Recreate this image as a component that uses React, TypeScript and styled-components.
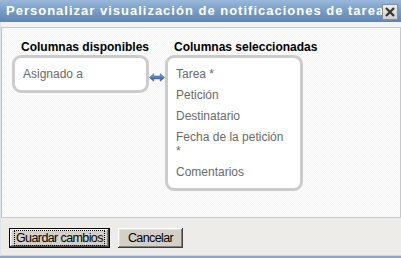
import React from "react";
import styled, { createGlobalStyle } from "styled-components";

const Global = createGlobalStyle`
  html, body { margin: 0; padding: 0; background: #ffffff; }
  body { width: 401px; height: 258px; overflow: hidden; font-family: "Liberation Sans", Arial, sans-serif; }
`;

const Dialog = styled.div`
  width: 401px;
  height: 258px;
  box-sizing: border-box;
  display: flex;
  flex-direction: column;
  background: #f3f3f3;
  border-bottom: 2px solid #8aa8c8;
`;

const TitleBar = styled.div`
  height: 22px;
  flex: none;
  display: flex;
  align-items: center;
  position: relative;
  background: linear-gradient(#9ab8da 0%, #7a9fc8 45%, #5f86b2 100%);
  overflow: hidden;
`;

const Title = styled.div`
  padding-left: 6px;
  color: #ffffff;
  font-family: "Liberation Sans", Arial, sans-serif;
  font-weight: bold;
  font-size: 13px;
  letter-spacing: 1px;
  white-space: nowrap;
  line-height: 22px;
`;

const CloseButton = styled.button`
  position: absolute;
  top: 4px;
  right: 3px;
  width: 16px;
  height: 16px;
  padding: 0;
  box-sizing: border-box;
  border: 1px solid #8d8d8d;
  background: linear-gradient(#ececec, #cfcfcf);
  display: flex;
  align-items: center;
  justify-content: center;
`;

const Body = styled.div`
  flex: 1;
  display: flex;
  flex-direction: column;
  padding-top: 5px;
  border-left: 1px solid #dde3ea;
`;

const Panel = styled.div`
  height: 191px;
  box-sizing: border-box;
  border: 1px solid #c3cad2;
  border-left-color: #b9c2cc;
  background-color: #fafafa;
  background-image: repeating-conic-gradient(#f6f6f6 0% 25%, #fcfcfc 0% 50%);
  background-size: 2px 2px;
  padding: 12px 0 0 10px;
  display: flex;
  align-items: flex-start;
`;

const Column = styled.div`
  display: flex;
  flex-direction: column;
`;

const Label = styled.div`
  font-family: "Liberation Sans", Arial, sans-serif;
  font-weight: bold;
  font-size: 12px;
  line-height: 14px;
  color: #000000;
  padding-left: 9px;
  margin-bottom: 1px;
  white-space: nowrap;
`;

const ListBox = styled.div<{ $w: number }>`
  width: ${(p) => p.$w}px;
  box-sizing: border-box;
  border: 3px solid #cccccc;
  border-radius: 9px;
  background: #ffffff;
  padding: 9px 12px 9px 8px;
  display: flex;
  flex-direction: column;
  gap: 7px;
`;

const Item = styled.div`
  font-family: "Liberation Sans", Arial, sans-serif;
  font-size: 12px;
  line-height: 14px;
  color: #6a6a6a;
`;

const ArrowCell = styled.div`
  width: 16px;
  padding-top: 33px;
  display: flex;
  justify-content: center;
`;

const Footer = styled.div`
  flex: 1;
  background: #eeece9;
  display: flex;
  align-items: flex-start;
  gap: 8px;
  padding: 10px 0 0 8px;
  border-bottom: 1px solid #d4d4d4;
`;

const Button = styled.button<{ $default?: boolean }>`
  height: 20px;
  box-sizing: border-box;
  background: #d4d0c8;
  font-family: "Liberation Sans", Arial, sans-serif;
  font-size: 12.5px;
  letter-spacing: -0.6px;
  color: #000000;
  padding: 0 ${(p) => (p.$default ? 4 : 10)}px;
  margin: 0;
  border: ${(p) => (p.$default ? "1px solid #000000" : "none")};
  box-shadow: inset -1px -1px #404040, inset 1px 1px #ffffff, inset -2px -2px #808080, inset 2px 2px #e6e3de;
  display: flex;
  align-items: center;
`;

const Focus = styled.span`
  border: 1px dotted #000000;
  padding: 0 1px;
  line-height: 14px;
`;

const Arrow = () => (
  <svg width="17" height="9" viewBox="0 0 17 9">
    <defs>
      <linearGradient id="ag" x1="0" y1="0" x2="0" y2="1">
        <stop offset="0" stopColor="#8db5e2" />
        <stop offset="0.5" stopColor="#4f82c0" />
        <stop offset="1" stopColor="#24558f" />
      </linearGradient>
    </defs>
    <path d="M0.5 4.5 L5 0.5 L5 3 L12 3 L12 0.5 L16.5 4.5 L12 8.5 L12 6 L5 6 L5 8.5 Z" fill="url(#ag)" stroke="#2d5f9a" strokeWidth="0.6" />
  </svg>
);

export default function App() {
  return (
    <>
      <Global />
      <Dialog>
        <TitleBar>
          <Title>Personalizar visualización de notificaciones de tarea</Title>
          <CloseButton aria-label="Cerrar">
            <svg width="12" height="12" viewBox="0 0 12 12">
              <path d="M2 2 L10 10 M10 2 L2 10" stroke="#333333" strokeWidth="2.2" />
            </svg>
          </CloseButton>
        </TitleBar>
        <Body>
          <Panel>
            <Column>
              <Label>Columnas disponibles</Label>
              <ListBox $w={137}>
                <Item>Asignado a</Item>
              </ListBox>
            </Column>
            <ArrowCell>
              <Arrow />
            </ArrowCell>
            <Column>
              <Label>Columnas seleccionadas</Label>
              <ListBox $w={138}>
                <Item>Tarea *</Item>
                <Item>Petición</Item>
                <Item>Destinatario</Item>
                <Item>Fecha de la petición *</Item>
                <Item>Comentarios</Item>
              </ListBox>
            </Column>
          </Panel>
          <Footer>
            <Button $default>
              <Focus>Guardar cambios</Focus>
            </Button>
            <Button>Cancelar</Button>
          </Footer>
        </Body>
      </Dialog>
    </>
  );
}
